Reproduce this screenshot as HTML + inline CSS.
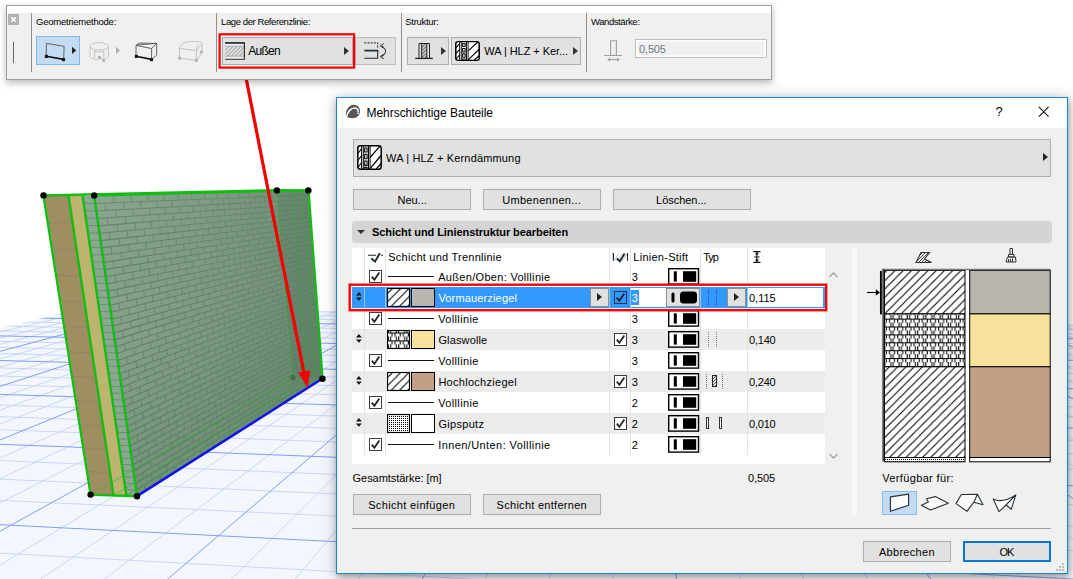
<!DOCTYPE html>
<html lang="de"><head><meta charset="utf-8"><title>Mehrschichtige Bauteile</title>
<style>
html,body{margin:0;padding:0;}
body{width:1073px;height:579px;overflow:hidden;background:#fff;position:relative;font-family:"Liberation Sans",sans-serif;font-size:12px;color:#000;}
#scene{position:absolute;left:0;top:0;}
.abs{position:absolute;}
.t{position:absolute;white-space:nowrap;line-height:14px;height:14px;}
/* toolbar */
#tb{position:absolute;left:6px;top:5px;width:766px;height:75px;background:#f0f0f0;border:1px solid #9d9d9d;box-sizing:border-box;box-shadow:0 3px 7px rgba(0,0,0,.28);}
#tb .cap{position:absolute;left:0;top:0;width:100%;height:7px;background:#fff;}
#tb .sep{position:absolute;top:7px;width:1px;height:59px;background:#8f8f8f;}
#tb .lbl{position:absolute;top:11px;font-size:9.5px;line-height:12px;white-space:nowrap;color:#000;}
.btn{position:absolute;box-sizing:border-box;background:#e1e1e1;border:1px solid #adadad;}
.arr{position:absolute;width:0;height:0;border-top:4px solid transparent;border-bottom:4px solid transparent;border-left:5px solid #222;}
/* dialog */
#dlg{position:absolute;left:336px;top:97px;width:732px;height:477px;box-sizing:border-box;border:1px solid #1883d7;background:#f0f0f0;box-shadow:0 1px 16px rgba(0,0,0,.2),1px 3px 7px rgba(0,0,0,.3);}
#dlg .title{position:absolute;left:0;top:0;width:730px;height:30px;background:#fff;}
.pb{position:absolute;box-sizing:border-box;background:#e1e1e1;border:1px solid #adadad;text-align:center;font-size:12px;line-height:19px;height:21px;white-space:nowrap;}
.row{position:absolute;left:16px;width:472px;height:21px;}
.cb{position:absolute;width:13px;height:13px;box-sizing:border-box;border:1px solid #333;background:#fff;}
.pen{position:absolute;width:32px;height:17px;box-sizing:border-box;border:2px solid #000;background:#fff;}
.pen i{position:absolute;left:4px;top:2px;width:3px;height:9px;background:#000;}
.pen b{position:absolute;left:13px;top:1px;width:13px;height:11px;background:#000;}
.sw{position:absolute;box-sizing:border-box;border:1px solid #000;width:24px;height:19px;}
.ln{position:absolute;height:1px;background:#000;left:36px;width:46px;top:10px;}
.vl{position:absolute;top:150px;width:1px;height:208px;background:#e3e3e3;}
</style></head>
<body>
<svg id="scene" width="1073" height="579" viewBox="0 0 1073 579">
<defs><clipPath id="gc"><path d="M0,328.3 L91,306.3 L1073,323.5 L1073,579 L0,579 Z"/></clipPath>
<linearGradient id="wg" x1="0" y1="0" x2="1" y2="0"><stop offset="0" stop-color="#86a48a"/><stop offset="0.55" stop-color="#7c9a81"/><stop offset="1" stop-color="#6d8b74"/></linearGradient>
<linearGradient id="mute" x1="0" y1="0" x2="1" y2="0"><stop offset="0" stop-color="#86a48a" stop-opacity="0.05"/><stop offset="0.5" stop-color="#7c9a81" stop-opacity="0.3"/><stop offset="1" stop-color="#6d8b74" stop-opacity="0.6"/></linearGradient><linearGradient id="vdark" x1="0" y1="0" x2="0.25" y2="1"><stop offset="0" stop-color="#a8c8ac" stop-opacity="0.12"/><stop offset="0.45" stop-color="#5a7a62" stop-opacity="0"/><stop offset="1" stop-color="#486850" stop-opacity="0.3"/></linearGradient><linearGradient id="fade" x1="0" y1="0" x2="0" y2="1"><stop offset="0" stop-color="#fff" stop-opacity="0.55"/><stop offset="1" stop-color="#fff" stop-opacity="0"/></linearGradient>
</defs>
<path d="M0,328.3 L91,306.3 L1073,323.5 L1073,579 L0,579 Z" fill="#f3f7fd"/>
<g clip-path="url(#gc)" fill="none">
<path d="M-2976.9,1007.2 L41705.2,10663.1 M-2455.3,887.9 L65598.3,11961.0 M-1763.1,729.6 L11801.3,2207.1 M-1521.6,674.4 L8530.9,1614.1 M-1324.4,629.3 L6741.9,1289.8 M-1021.5,560.1 L4837.1,944.4 M-902.7,532.9 L4270.0,841.6 M-799.9,509.4 L3837.7,763.2 M-630.6,470.7 L3222.1,651.6 M-560.1,454.6 L2995.2,610.5 M-497.1,440.2 L2804.9,576.0 M-389.2,415.5 L2503.4,521.3 M-342.6,404.8 L2382.0,499.3 M-300.1,395.1 L2275.4,480.0 M-225.3,378.0 L2096.9,447.6 M-192.2,370.5 L2021.5,433.9 M-161.6,363.5 L1953.4,421.6 M-106.7,350.9 L1835.5,400.2 M-82.0,345.3 L1784.1,390.9 M-58.9,340.0 L1736.9,382.3 M-16.9,330.4 L1653.3,367.2 M2.2,326.0 L1616.0,360.4 M20.2,321.9 L1581.4,354.1 M53.4,314.3 L1518.9,342.8 M68.6,310.8 L1490.7,337.7 M83.1,307.5 L1464.2,332.9 M1550.5,330.4 L65537.2,10666.3 M1523.9,329.9 L63860.0,10666.1 M1471.2,328.9 L60505.7,10665.6 M1445.1,328.5 L58828.6,10665.4 M1419.2,328.0 L57151.4,10665.2 M1367.9,327.1 L53797.1,10664.7 M1342.5,326.6 L52119.9,10664.5 M1317.2,326.2 L50442.8,10664.3 M1267.1,325.3 L47088.5,10663.8 M1242.3,324.9 L45411.3,10663.6 M1217.6,324.4 L43734.2,10663.4 M1168.8,323.5 L52590.0,13882.5 M1144.5,323.1 L39061.4,10761.4 M1120.5,322.7 L30552.7,8798.4 M1072.8,321.8 L20443.7,6466.2 M1049.2,321.4 L17196.5,5717.1 M1025.7,321.0 L14640.9,5127.5 M979.1,320.1 L10876.0,4258.9 M956.0,319.7 L9449.4,3929.8 M933.1,319.3 L8235.9,3649.8 M887.6,318.5 L6281.9,3199.0 M865.1,318.1 L5483.7,3014.9 M842.7,317.7 L4777.3,2851.9 M798.3,316.9 L3583.2,2576.4 M776.3,316.5 L3073.9,2459.0 M754.4,316.1 L2612.3,2352.5 M711.0,315.3 L1807.5,2166.8 M689.5,315.0 L1454.6,2085.4 M668.1,314.6 L1129.5,2010.4 M625.7,313.8 L550.5,1876.8 M604.6,313.4 L291.6,1817.1 M583.7,313.1 L50.3,1761.4 M542.3,312.3 L-386.2,1660.7 M521.7,312.0 L-584.2,1615.0 M501.3,311.6 L-770.4,1572.1 M460.7,310.9 L-1111.1,1493.5 M440.6,310.5 L-1267.4,1457.4 M420.6,310.2 L-1415.4,1423.2 M381.0,309.4 L-1688.8,1360.2 M361.3,309.1 L-1815.4,1331.0 M341.7,308.7 L-1935.8,1303.2 M302.9,308.0 L-2160.0,1251.5 M283.7,307.7 L-2264.5,1227.4 M264.6,307.4 L-2364.5,1204.3 M226.6,306.7 L-2551.6,1161.1 M207.8,306.3 L-2639.4,1140.9 M189.0,306.0 L-2723.7,1121.4 M151.9,305.3 L-2882.3,1084.8 M133.4,305.0 L-2957.1,1067.6 M115.1,304.7 L-3029.1,1051.0" stroke="#c6d3f7" stroke-width="0.9"/>
<path d="M-2065.5,798.8 L19693.5,3638.0 M-1160.2,591.8 L5613.6,1085.2 M-709.9,488.8 L3497.2,701.5 M-440.4,427.2 L2642.9,546.6 M-261.1,386.2 L2181.0,462.9 M-133.1,357.0 L1891.7,410.4 M-37.3,335.0 L1693.4,374.4 M37.3,318.0 L1549.1,348.3 M96.9,304.4 L1439.3,328.4 M1497.5,329.4 L62182.9,10665.8 M1393.5,327.6 L55474.2,10664.9 M1292.1,325.7 L48765.6,10664.0 M1193.1,324.0 L42057.0,10663.1 M1096.6,322.2 L24707.2,7449.8 M1002.3,320.6 L12577.3,4651.4 M910.3,318.9 L7191.0,3408.8 M820.4,317.3 L4147.8,2706.7 M732.6,315.7 L2192.0,2255.5 M646.8,314.2 L829.0,1941.0 M562.9,312.7 L-175.1,1709.4 M480.9,311.2 L-945.7,1531.6 M400.7,309.8 L-1555.7,1390.9 M322.3,308.4 L-2050.5,1276.7 M245.5,307.0 L-2460.1,1182.2 M170.4,305.7 L-2804.6,1102.8 M96.9,304.4 L-3098.4,1035.0" stroke="#7f9fee" stroke-width="1"/>
</g>
<path d="M94.2,196.0 L308.5,190.4 L322.5,378.5 L137.0,496.2 Z" fill="url(#wg)"/>
<path d="M95.3,203.5 L308.8,194.9 M96.3,211.0 L309.2,199.5 M97.4,218.5 L309.5,204.0 M98.5,225.9 L309.8,208.5 M99.5,233.3 L310.2,213.0 M100.6,240.6 L310.5,217.4 M101.6,247.9 L310.8,221.9 M102.6,255.2 L311.2,226.4 M103.7,262.4 L311.5,230.8 M104.7,269.6 L311.8,235.2 M105.7,276.8 L312.2,239.6 M106.7,284.0 L312.5,244.0 M107.8,291.1 L312.8,248.4 M108.8,298.2 L313.1,252.8 M109.8,305.2 L313.5,257.1 M110.8,312.2 L313.8,261.5 M111.8,319.2 L314.1,265.8 M112.8,326.1 L314.4,270.2 M113.7,333.1 L314.8,274.5 M114.7,339.9 L315.1,278.8 M115.7,346.8 L315.4,283.1 M116.7,353.6 L315.7,287.3 M117.6,360.4 L316.0,291.6 M118.6,367.2 L316.3,295.9 M119.6,373.9 L316.7,300.1 M120.5,380.6 L317.0,304.3 M121.5,387.3 L317.3,308.5 M122.4,393.9 L317.6,312.8 M123.4,400.5 L317.9,316.9 M124.3,407.1 L318.2,321.1 M125.2,413.6 L318.5,325.3 M126.2,420.2 L318.9,329.5 M127.1,426.6 L319.2,333.6 M128.0,433.1 L319.5,337.7 M128.9,439.5 L319.8,341.9 M129.8,445.9 L320.1,346.0 M130.7,452.3 L320.4,350.1 M131.7,458.7 L320.7,354.2 M132.6,465.0 L321.0,358.3 M133.4,471.3 L321.3,362.3 M134.3,477.6 L321.6,366.4 M135.2,483.8 L321.9,370.4 M136.1,490.0 L322.2,374.5" stroke="#587560" stroke-width="1.1" fill="none" opacity="0.85"/>
<path d="M113.3,195.5 L114.3,202.8 M131.1,195.0 L132.0,202.0 M147.7,194.6 L148.5,201.4 M163.2,194.2 L164.0,200.8 M177.8,193.8 L178.5,200.2 M191.5,193.5 L192.1,199.6 M204.3,193.1 L205.0,199.1 M216.5,192.8 L217.1,198.6 M228.0,192.5 L228.6,198.2 M238.9,192.2 L239.4,197.7 M249.2,192.0 L249.7,197.3 M258.9,191.7 L259.4,196.9 M268.2,191.5 L268.7,196.6 M277.1,191.2 L277.5,196.2 M285.5,191.0 L285.9,195.9 M293.5,190.8 L293.9,195.5 M301.2,190.6 L301.5,195.2 M104.9,203.1 L106.0,210.5 M123.3,202.4 L124.2,209.5 M140.4,201.7 L141.3,208.6 M156.4,201.1 L157.2,207.7 M171.4,200.5 L172.1,206.9 M185.4,199.9 L186.1,206.1 M198.7,199.4 L199.3,205.4 M211.1,198.9 L211.8,204.7 M222.9,198.4 L223.5,204.1 M234.0,197.9 L234.6,203.5 M244.6,197.5 L245.1,202.9 M254.6,197.1 L255.1,202.4 M264.1,196.7 L264.6,201.9 M273.1,196.4 L273.6,201.4 M281.7,196.0 L282.1,200.9 M289.9,195.7 L290.3,200.5 M297.8,195.4 L298.1,200.1 M305.2,195.1 L305.6,199.7 M115.3,210.0 L116.2,217.2 M132.9,209.0 L133.8,216.0 M149.4,208.1 L150.2,214.9 M164.8,207.3 L165.6,213.8 M179.2,206.5 L180.0,212.8 M192.8,205.8 L193.5,211.9 M205.6,205.1 L206.3,211.0 M217.7,204.4 L218.3,210.2 M229.1,203.8 L229.7,209.4 M239.9,203.2 L240.5,208.7 M250.2,202.7 L250.7,208.0 M259.9,202.1 L260.3,207.3 M269.1,201.6 L269.6,206.7 M277.9,201.2 L278.3,206.1 M286.3,200.7 L286.7,205.5 M294.3,200.3 L294.6,205.0 M301.9,199.9 L302.2,204.5 M107.0,217.8 L108.0,225.1 M125.2,216.6 L126.1,223.6 M142.1,215.4 L143.0,222.2 M158.0,214.3 L158.8,220.9 M172.9,213.3 L173.6,219.7 M186.8,212.4 L187.5,218.5 M200.0,211.5 L200.6,217.5 M212.4,210.6 L213.0,216.5 M224.1,209.8 L224.7,215.5 M235.1,209.1 L235.7,214.6 M245.6,208.3 L246.1,213.7 M255.6,207.7 L256.0,212.9 M265.0,207.0 L265.5,212.1 M274.0,206.4 L274.4,211.4 M282.5,205.8 L282.9,210.7 M290.7,205.3 L291.1,210.0 M298.5,204.7 L298.8,209.4 M305.9,204.2 L306.3,208.8 M117.2,224.3 L118.2,231.5 M134.7,222.9 L135.6,229.8 M151.0,221.6 L151.9,228.2 M166.3,220.3 L167.1,226.7 M180.7,219.1 L181.4,225.4 M194.2,218.0 L194.9,224.1 M206.9,217.0 L207.5,222.9 M218.9,216.0 L219.5,221.7 M230.2,215.0 L230.8,220.6 M241.0,214.1 L241.5,219.6 M251.2,213.3 L251.6,218.6 M260.8,212.5 L261.3,217.7 M270.0,211.8 L270.4,216.8 M278.7,211.0 L279.1,216.0 M287.1,210.4 L287.5,215.2 M295.0,209.7 L295.4,214.4 M302.6,209.1 L302.9,213.7 M109.0,232.3 L110.0,239.6 M127.0,230.6 L128.0,237.6 M143.9,229.0 L144.7,235.7 M159.6,227.5 L160.4,234.0 M174.4,226.0 L175.1,232.4 M188.2,224.7 L188.9,230.9 M201.3,223.5 L202.0,229.4 M213.6,222.3 L214.2,228.1 M225.2,221.1 L225.8,226.8 M236.2,220.1 L236.8,225.6 M246.6,219.1 L247.1,224.4 M256.5,218.1 L257.0,223.3 M265.9,217.2 L266.4,222.3 M274.8,216.4 L275.3,221.3 M283.4,215.6 L283.8,220.4 M291.5,214.8 L291.8,219.5 M299.2,214.0 L299.6,218.6 M306.6,213.3 L306.9,217.8 M119.2,238.6 L120.1,245.6 M136.5,236.6 L137.4,243.5 M152.7,234.9 L153.5,241.5 M167.9,233.2 L168.7,239.6 M182.1,231.6 L182.9,237.8 M195.5,230.1 L196.2,236.2 M208.2,228.7 L208.8,234.6 M220.1,227.4 L220.7,233.1 M231.4,226.2 L231.9,231.7 M242.0,225.0 L242.5,230.4 M252.1,223.9 L252.6,229.1 M261.7,222.8 L262.2,228.0 M270.9,221.8 L271.3,226.8 M279.6,220.9 L280.0,225.7 M287.8,219.9 L288.2,224.7 M295.7,219.1 L296.1,223.7 M303.3,218.2 L303.6,222.8 M111.0,246.7 L112.0,253.9 M128.9,244.5 L129.8,251.4 M145.6,242.4 L146.5,249.1 M161.2,240.5 L162.0,247.0 M175.9,238.7 L176.6,245.0 M189.6,237.0 L190.3,243.1 M202.6,235.4 L203.3,241.3 M214.8,233.8 L215.4,239.6 M226.4,232.4 L226.9,238.0 M237.3,231.0 L237.8,236.5 M247.7,229.8 L248.2,235.1 M257.5,228.5 L258.0,233.7 M266.8,227.4 L267.3,232.4 M275.7,226.3 L276.1,231.2 M284.2,225.2 L284.6,230.0 M292.2,224.2 L292.6,228.9 M299.9,223.3 L300.3,227.9 M307.3,222.3 L307.6,226.8 M121.1,252.6 L122.0,259.6 M138.3,250.3 L139.2,257.0 M154.4,248.0 L155.2,254.6 M169.4,246.0 L170.2,252.3 M183.6,244.0 L184.3,250.2 M196.9,242.2 L197.6,248.1 M209.4,240.4 L210.1,246.2 M221.3,238.8 L221.9,244.4 M232.5,237.2 L233.0,242.7 M243.1,235.8 L243.6,241.1 M253.1,234.4 L253.6,239.6 M262.7,233.1 L263.1,238.2 M271.7,231.8 L272.2,236.8 M280.4,230.6 L280.8,235.5 M288.6,229.5 L289.0,234.2 M296.5,228.4 L296.9,233.0 M304.0,227.3 L304.3,231.9 M113.0,261.0 L114.0,268.1 M130.8,258.3 L131.7,265.2 M147.3,255.8 L148.2,262.4 M162.8,253.4 L163.6,259.9 M177.4,251.2 L178.1,257.4 M191.0,249.1 L191.7,255.2 M203.9,247.2 L204.5,253.1 M216.0,245.3 L216.6,251.0 M227.5,243.6 L228.1,249.1 M238.4,241.9 L238.9,247.3 M248.7,240.4 L249.2,245.6 M258.4,238.9 L258.9,244.0 M267.7,237.5 L268.2,242.5 M276.5,236.1 L277.0,241.0 M285.0,234.8 L285.3,239.6 M293.0,233.6 L293.4,238.3 M300.6,232.4 L301.0,237.0 M308.0,231.3 L308.3,235.8 M123.0,266.6 L123.9,273.5 M140.1,263.8 L140.9,270.5 M156.0,261.1 L156.8,267.6 M171.0,258.6 L171.7,264.9 M185.0,256.3 L185.7,262.4 M198.2,254.1 L198.9,260.0 M210.7,252.0 L211.3,257.8 M222.4,250.1 L223.0,255.7 M233.6,248.2 L234.1,253.7 M244.1,246.5 L244.6,251.8 M254.1,244.8 L254.6,250.0 M263.6,243.2 L264.0,248.3 M272.6,241.7 L273.0,246.7 M281.2,240.3 L281.6,245.1 M289.4,238.9 L289.8,243.7 M297.2,237.6 L297.6,242.3 M304.7,236.4 L305.0,240.9 M115.0,275.2 L116.0,282.2 M132.6,272.0 L133.5,278.8 M149.0,269.0 L149.9,275.6 M164.4,266.3 L165.2,272.6 M178.8,263.7 L179.6,269.8 M192.4,261.2 L193.1,267.2 M205.2,258.9 L205.8,264.7 M217.2,256.7 L217.8,262.4 M228.6,254.7 L229.2,260.2 M239.4,252.7 L240.0,258.1 M249.7,250.9 L250.2,256.1 M259.4,249.1 L259.8,254.2 M268.6,247.5 L269.0,252.5 M277.4,245.9 L277.8,250.8 M285.7,244.4 L286.1,249.1 M293.7,242.9 L294.1,247.6 M301.4,241.6 L301.7,246.1 M308.6,240.3 L309.0,244.7 M124.9,280.4 L125.8,287.3 M141.8,277.2 L142.7,283.8 M157.6,274.1 L158.4,280.5 M172.5,271.2 L173.2,277.5 M186.4,268.5 L187.1,274.6 M199.5,266.0 L200.2,271.8 M211.9,263.5 L212.5,269.3 M223.6,261.3 L224.2,266.9 M234.7,259.1 L235.2,264.6 M245.1,257.1 L245.6,262.4 M255.1,255.2 L255.5,260.3 M264.5,253.3 L264.9,258.4 M273.5,251.6 L273.9,256.5 M282.0,249.9 L282.4,254.7 M290.2,248.4 L290.6,253.0 M297.9,246.8 L298.3,251.4 M305.4,245.4 L305.7,249.9 M116.9,289.2 L117.9,296.1 M134.4,285.5 L135.3,292.3 M150.7,282.1 L151.5,288.7 M166.0,279.0 L166.7,285.3 M180.3,276.0 L181.0,282.1 M193.8,273.2 L194.4,279.1 M206.5,270.5 L207.1,276.3 M218.4,268.0 L219.0,273.7 M229.8,265.7 L230.3,271.2 M240.5,263.5 L241.0,268.8 M250.7,261.3 L251.1,266.5 M260.3,259.3 L260.8,264.4 M269.5,257.4 L269.9,262.4 M278.2,255.6 L278.6,260.4 M286.5,253.9 L286.9,258.6 M294.5,252.2 L294.8,256.8 M302.1,250.6 L302.4,255.2 M309.3,249.1 L309.6,253.6 M126.8,294.2 L127.7,301.0 M143.5,290.4 L144.4,297.0 M159.3,286.9 L160.1,293.3 M174.0,283.7 L174.7,289.9 M187.8,280.6 L188.5,286.6 M200.9,277.7 L201.5,283.6 M213.1,275.0 L213.8,280.7 M224.8,272.4 L225.3,277.9 M235.7,270.0 L236.3,275.4 M246.1,267.7 L246.7,272.9 M256.0,265.5 L256.5,270.6 M265.4,263.4 L265.9,268.4 M274.3,261.4 L274.8,266.3 M282.8,259.5 L283.2,264.3 M290.9,257.7 L291.3,262.4 M298.7,256.0 L299.0,260.6 M306.1,254.4 L306.4,258.8 M118.9,303.0 L119.8,309.9 M136.2,299.0 L137.1,305.6 M152.4,295.2 L153.2,301.6 M167.5,291.6 L168.3,297.8 M181.7,288.2 L182.5,294.3 M195.1,285.1 L195.8,291.0 M207.7,282.1 L208.4,287.8 M219.6,279.3 L220.2,284.9 M230.9,276.6 L231.4,282.1 M241.5,274.1 L242.1,279.4 M251.6,271.7 L252.1,276.9 M261.2,269.5 L261.7,274.5 M270.4,267.3 L270.8,272.2 M279.0,265.3 L279.5,270.1 M287.3,263.3 L287.7,268.0 M295.2,261.5 L295.6,266.0 M302.8,259.7 L303.1,264.2 M310.0,258.0 L310.3,262.4 M128.6,307.8 L129.5,314.5 M145.3,303.6 L146.1,310.1 M160.9,299.7 L161.6,306.0 M175.5,296.0 L176.2,302.2 M189.2,292.6 L189.9,298.6 M202.2,289.4 L202.8,295.2 M214.4,286.3 L215.0,292.0 M225.9,283.5 L226.5,288.9 M236.8,280.7 L237.3,286.1 M247.2,278.1 L247.7,283.4 M257.0,275.7 L257.4,280.8 M266.3,273.4 L266.7,278.3 M275.2,271.1 L275.6,276.0 M283.6,269.0 L284.0,273.8 M291.7,267.0 L292.1,271.6 M299.4,265.1 L299.8,269.6 M306.8,263.3 L307.1,267.7 M120.8,316.8 L121.8,323.6 M138.0,312.3 L138.8,318.9 M154.0,308.0 L154.8,314.5 M169.0,304.1 L169.8,310.3 M183.2,300.4 L183.9,306.4 M196.5,296.9 L197.1,302.7 M209.0,293.6 L209.6,299.3 M220.8,290.4 L221.4,296.0 M232.0,287.5 L232.5,292.9 M242.6,284.7 L243.1,290.0 M252.6,282.0 L253.1,287.2 M262.2,279.5 L262.6,284.5 M271.2,277.1 L271.7,282.0 M279.9,274.9 L280.3,279.6 M288.1,272.7 L288.5,277.4 M296.0,270.6 L296.3,275.2 M303.5,268.6 L303.8,273.1 M310.6,266.7 L311.0,271.1 M130.4,321.2 L131.4,327.9 M147.0,316.6 L147.8,323.1 M162.4,312.3 L163.2,318.6 M177.0,308.3 L177.7,314.4 M190.6,304.5 L191.3,310.5 M203.5,301.0 L204.1,306.7 M215.6,297.6 L216.2,303.2 M227.0,294.4 L227.6,299.9 M237.9,291.4 L238.4,296.7 M248.2,288.6 L248.7,293.7 M257.9,285.8 L258.4,290.9 M267.2,283.3 L267.6,288.2 M276.0,280.8 L276.4,285.6 M284.4,278.5 L284.8,283.2 M292.4,276.3 L292.8,280.9 M300.1,274.1 L300.5,278.6 M307.4,272.1 L307.8,276.5 M122.7,330.4 L123.6,337.2 M139.7,325.5 L140.6,332.0 M155.6,320.8 L156.5,327.2 M170.6,316.5 L171.3,322.7 M184.6,312.4 L185.3,318.4 M197.8,308.6 L198.4,314.4 M210.2,304.9 L210.8,310.6 M222.0,301.5 L222.6,307.0 M233.1,298.3 L233.6,303.6 M243.6,295.2 L244.1,300.4 M253.6,292.3 L254.1,297.4 M263.1,289.5 L263.5,294.5 M272.1,286.9 L272.5,291.8 M280.7,284.4 L281.1,289.1 M288.9,282.0 L289.3,286.7 M296.7,279.7 L297.1,284.3 M304.2,277.6 L304.5,282.0 M311.3,275.5 L311.6,279.8 M132.3,334.6 L133.2,341.2 M148.7,329.6 L149.5,336.0 M164.0,324.9 L164.8,331.1 M178.4,320.5 L179.2,326.5 M192.0,316.4 L192.7,322.2 M204.7,312.5 L205.4,318.2 M216.8,308.8 L217.4,314.3 M228.2,305.3 L228.7,310.7 M238.9,302.0 L239.5,307.3 M249.2,298.9 L249.7,304.0 M258.9,295.9 L259.3,301.0 M268.1,293.1 L268.5,298.0 M276.9,290.4 L277.3,295.2 M285.2,287.9 L285.6,292.6 M293.2,285.5 L293.6,290.0 M300.8,283.1 L301.2,287.6 M308.1,280.9 L308.4,285.3 M124.6,344.0 L125.5,350.7 M141.5,338.6 L142.3,345.1 M157.3,333.5 L158.1,339.8 M172.1,328.8 L172.8,334.9 M186.0,324.4 L186.7,330.3 M199.1,320.2 L199.8,325.9 M211.5,316.2 L212.1,321.8 M223.1,312.5 L223.7,318.0 M234.2,309.0 L234.7,314.3 M244.6,305.6 L245.1,310.8 M254.6,302.5 L255.0,307.5 M264.0,299.5 L264.4,304.4 M273.0,296.6 L273.4,301.4 M281.5,293.9 L281.9,298.6 M289.6,291.3 L290.0,295.9 M297.4,288.8 L297.8,293.3 M304.8,286.4 L305.2,290.8 M312.0,284.2 L312.3,288.5 M134.1,347.8 L135.0,354.4 M150.3,342.4 L151.2,348.8 M165.6,337.3 L166.4,343.5 M179.9,332.6 L180.6,338.6 M193.3,328.1 L194.0,333.9 M206.0,323.9 L206.6,329.5 M218.0,319.9 L218.6,325.4 M229.3,316.1 L229.8,321.5 M240.0,312.5 L240.5,317.8 M250.2,309.2 L250.6,314.3 M259.8,306.0 L260.3,310.9 M269.0,302.9 L269.4,307.8 M277.7,300.0 L278.1,304.8 M286.0,297.2 L286.4,301.9 M293.9,294.6 L294.3,299.1 M301.5,292.1 L301.9,296.5 M308.8,289.6 L309.1,294.0 M126.5,357.3 L127.4,364.0 M143.2,351.5 L144.1,358.0 M158.9,346.1 L159.7,352.3 M173.6,341.0 L174.3,347.1 M187.4,336.2 L188.1,342.1 M200.4,331.7 L201.1,337.4 M212.7,327.4 L213.3,333.0 M224.3,323.4 L224.9,328.8 M235.3,319.6 L235.8,324.9 M245.6,316.0 L246.2,321.2 M255.5,312.6 L256.0,317.6 M264.9,309.3 L265.3,314.2 M273.8,306.2 L274.2,311.0 M282.3,303.3 L282.7,308.0 M290.4,300.5 L290.8,305.1 M298.1,297.8 L298.5,302.3 M305.5,295.2 L305.9,299.6 M312.6,292.8 L312.9,297.1 M135.9,360.9 L136.8,367.5 M152.0,355.1 L152.8,361.4 M167.1,349.7 L167.9,355.8 M181.3,344.5 L182.0,350.5 M194.7,339.7 L195.4,345.5 M207.3,335.2 L207.9,340.8 M219.2,330.9 L219.7,336.4 M230.4,326.8 L231.0,332.2 M241.0,323.0 L241.6,328.2 M251.1,319.4 L251.6,324.4 M260.7,315.9 L261.2,320.9 M269.8,312.6 L270.3,317.5 M278.5,309.5 L278.9,314.2 M286.8,306.5 L287.2,311.1 M294.7,303.7 L295.1,308.2 M302.2,300.9 L302.6,305.4 M309.4,298.3 L309.8,302.7 M128.3,370.6 L129.2,377.2 M144.9,364.4 L145.8,370.8 M160.5,358.6 L161.3,364.8 M175.1,353.1 L175.8,359.1 M188.8,348.0 L189.5,353.8 M201.7,343.1 L202.4,348.8 M213.9,338.6 L214.5,344.1 M225.4,334.3 L226.0,339.6 M236.3,330.2 L236.9,335.4 M246.7,326.3 L247.2,331.4 M256.5,322.6 L256.9,327.6 M265.8,319.1 L266.2,324.0 M274.7,315.8 L275.1,320.6 M283.1,312.7 L283.5,317.3 M291.2,309.6 L291.5,314.2 M298.9,306.8 L299.2,311.2 M306.2,304.0 L306.6,308.4 M313.3,301.4 L313.6,305.6 M137.6,373.9 L138.5,380.4 M153.7,367.7 L154.5,374.0 M168.7,361.9 L169.4,368.0 M182.8,356.4 L183.5,362.3 M196.0,351.3 L196.7,357.0 M208.5,346.4 L209.2,352.0 M220.3,341.8 L220.9,347.3 M231.5,337.5 L232.1,342.8 M242.1,333.4 L242.6,338.6 M252.1,329.5 L252.6,334.5 M261.6,325.8 L262.1,330.7 M270.7,322.3 L271.1,327.1 M279.3,318.9 L279.8,323.6 M287.6,315.7 L288.0,320.3 M295.4,312.7 L295.8,317.2 M302.9,309.8 L303.3,314.2 M310.1,307.0 L310.4,311.3 M130.1,383.8 L131.1,390.3 M146.6,377.1 L147.5,383.5 M162.1,370.9 L162.9,377.1 M176.6,365.1 L177.3,371.1 M190.2,359.6 L190.9,365.4 M203.0,354.5 L203.7,360.1 M215.1,349.6 L215.7,355.1 M226.6,345.0 L227.1,350.4 M237.4,340.7 L237.9,345.9 M247.7,336.5 L248.2,341.6 M257.4,332.6 L257.9,337.6 M266.7,328.9 L267.1,333.7 M275.5,325.3 L275.9,330.1 M283.9,322.0 L284.3,326.6 M291.9,318.7 L292.3,323.3 M299.6,315.7 L299.9,320.1 M306.9,312.7 L307.2,317.1 M313.9,309.9 L314.2,314.2 M139.4,386.8 L140.3,393.2 M155.3,380.2 L156.1,386.4 M170.2,374.0 L170.9,380.1 M184.2,368.2 L184.9,374.1 M197.4,362.7 L198.0,368.4 M209.8,357.6 L210.4,363.1 M221.5,352.7 L222.1,358.1 M232.6,348.1 L233.1,353.4 M243.1,343.7 L243.6,348.9 M253.1,339.6 L253.6,344.6 M262.6,335.6 L263.0,340.5 M271.6,331.9 L272.0,336.7 M280.2,328.3 L280.6,333.0 M288.3,324.9 L288.7,329.5 M296.2,321.7 L296.5,326.1 M303.6,318.6 L304.0,322.9 M310.8,315.6 L311.1,319.9 M132.0,396.8 L132.9,403.3 M148.3,389.8 L149.2,396.1 M163.6,383.2 L164.4,389.3 M178.0,377.0 L178.8,382.9 M191.5,371.2 L192.2,377.0 M204.3,365.7 L204.9,371.3 M216.3,360.6 L216.9,366.0 M227.7,355.7 L228.3,361.0 M238.5,351.1 L239.0,356.3 M248.7,346.7 L249.2,351.7 M258.4,342.5 L258.8,347.5 M267.6,338.6 L268.0,343.4 M276.3,334.8 L276.8,339.5 M284.7,331.2 L285.1,335.8 M292.7,327.8 L293.0,332.3 M300.3,324.5 L300.6,328.9 M307.6,321.4 L307.9,325.7 M314.5,318.4 L314.9,322.6 M141.1,399.6 L142.0,406.0 M156.9,392.6 L157.7,398.8 M171.7,386.1 L172.4,392.1 M185.6,379.9 L186.3,385.7 M198.7,374.1 L199.3,379.8 M211.0,368.6 L211.6,374.2 M222.7,363.5 L223.2,368.8 M233.7,358.6 L234.2,363.8 M244.1,354.0 L244.6,359.1 M254.1,349.6 L254.5,354.5 M263.5,345.4 L263.9,350.3 M272.4,341.4 L272.9,346.2 M281.0,337.6 L281.4,342.3 M289.1,334.0 L289.5,338.6 M296.9,330.6 L297.3,335.0 M304.3,327.3 L304.7,331.6 M311.4,324.1 L311.8,328.4 M133.8,409.7 L134.7,416.2 M150.0,402.3 L150.8,408.5 M165.2,395.4 L166.0,401.4 M179.5,388.8 L180.2,394.7 M192.9,382.7 L193.6,388.4 M205.6,376.9 L206.2,382.5 M217.5,371.5 L218.1,376.9 M228.8,366.3 L229.4,371.6 M239.5,361.4 L240.0,366.6 M249.7,356.8 L250.1,361.8 M259.3,352.4 L259.8,357.3 M268.5,348.2 L268.9,353.0 M277.2,344.2 L277.6,348.9 M285.5,340.4 L285.9,345.0 M293.4,336.8 L293.8,341.3 M301.0,333.3 L301.4,337.7 M308.2,330.0 L308.6,334.3 M315.2,326.8 L315.5,331.0 M142.9,412.3 L143.7,418.6 M158.5,404.9 L159.3,411.0 M173.2,398.0 L173.9,403.9 M187.0,391.5 L187.7,397.3 M200.0,385.4 L200.6,391.0 M212.2,379.6 L212.8,385.1 M223.8,374.2 L224.4,379.5 M234.8,369.0 L235.3,374.2 M245.2,364.1 L245.7,369.2 M255.0,359.5 L255.5,364.4 M264.4,355.1 L264.8,359.9 M273.3,350.9 L273.7,355.6 M281.8,346.9 L282.2,351.5 M289.9,343.1 L290.3,347.6 M297.6,339.5 L298.0,343.9 M305.0,336.0 L305.3,340.3 M312.1,332.6 L312.4,336.9 M135.5,422.5 L136.4,428.9 M151.7,414.7 L152.5,420.9 M166.7,407.4 L167.5,413.4 M180.9,400.6 L181.6,406.4 M194.3,394.1 L194.9,399.8 M206.8,388.0 L207.5,393.5 M218.7,382.3 L219.3,387.6 M229.9,376.8 L230.5,382.1 M240.6,371.7 L241.1,376.8 M250.6,366.8 L251.1,371.8 M260.2,362.2 L260.7,367.0 M269.3,357.7 L269.8,362.5 M278.0,353.5 L278.4,358.2 M286.3,349.5 L286.7,354.1 M294.2,345.7 L294.5,350.2 M301.7,342.1 L302.1,346.4 M308.9,338.6 L309.2,342.8 M315.8,335.2 L316.1,339.4 M144.6,424.8 L145.4,431.1 M160.1,417.1 L160.9,423.2 M174.7,409.9 L175.4,415.7 M188.4,403.0 L189.1,408.8 M201.3,396.6 L201.9,402.2 M213.5,390.5 L214.1,396.0 M225.0,384.8 L225.5,390.1 M235.8,379.4 L236.4,384.5 M246.2,374.3 L246.7,379.3 M256.0,369.4 L256.4,374.3 M265.3,364.7 L265.7,369.5 M274.1,360.3 L274.6,365.0 M282.6,356.1 L283.0,360.7 M290.6,352.1 L291.0,356.6 M298.3,348.3 L298.7,352.7 M305.7,344.6 L306.0,348.9 M312.7,341.1 L313.0,345.3 M137.3,435.2 L138.2,441.6 M153.3,427.1 L154.1,433.2 M168.3,419.4 L169.0,425.3 M182.4,412.2 L183.1,418.0 M195.6,405.4 L196.3,411.0 M208.1,399.0 L208.7,404.5 M219.9,393.0 L220.5,398.3 M231.0,387.3 L231.6,392.5 M241.6,381.9 L242.1,387.0 M251.6,376.8 L252.1,381.7 M261.1,371.9 L261.6,376.7 M270.2,367.2 L270.6,372.0 M278.8,362.8 L279.2,367.4 M287.0,358.6 L287.4,363.1 M294.9,354.6 L295.3,359.0 M302.4,350.8 L302.8,355.1 M309.6,347.1 L309.9,351.3 M316.4,343.6 L316.8,347.7 M146.3,437.3 L147.1,443.5 M161.7,429.2 L162.5,435.2 M176.2,421.6 L176.9,427.4 M189.8,414.5 L190.4,420.1 M202.6,407.7 L203.2,413.3 M214.7,401.4 L215.3,406.8 M226.1,395.4 L226.7,400.6 M236.9,389.7 L237.4,394.8 M247.2,384.3 L247.7,389.3 M256.9,379.2 L257.4,384.1 M266.2,374.3 L266.6,379.1 M275.0,369.7 L275.4,374.3 M283.4,365.3 L283.8,369.8 M291.4,361.1 L291.8,365.5 M299.1,357.0 L299.4,361.4 M306.4,353.2 L306.7,357.5 M313.4,349.5 L313.7,353.7 M139.1,447.8 L139.9,454.1 M154.9,439.3 L155.7,445.4 M169.8,431.3 L170.6,437.2 M183.8,423.7 L184.5,429.5 M196.9,416.6 L197.6,422.2 M209.3,410.0 L209.9,415.4 M221.0,403.6 L221.6,408.9 M232.1,397.7 L232.7,402.8 M242.6,392.0 L243.1,397.0 M252.6,386.6 L253.1,391.6 M262.1,381.5 L262.5,386.3 M271.1,376.7 L271.5,381.4 M279.6,372.1 L280.0,376.6 M287.8,367.6 L288.2,372.1 M295.6,363.4 L296.0,367.8 M303.1,359.4 L303.4,363.7 M310.2,355.6 L310.6,359.8 M317.1,351.9 L317.4,356.0 M148.0,449.7 L148.8,455.8 M163.3,441.2 L164.0,447.2 M177.6,433.3 L178.4,439.1 M191.1,425.8 L191.8,431.4 M203.9,418.8 L204.5,424.3 M215.9,412.1 L216.5,417.5 M227.2,405.8 L227.8,411.1 M238.0,399.9 L238.5,405.0 M248.2,394.3 L248.7,399.2 M257.9,388.9 L258.3,393.8 M267.1,383.8 L267.5,388.6 M275.8,379.0 L276.2,383.6 M284.2,374.4 L284.6,378.9 M292.1,370.0 L292.5,374.4 M299.8,365.7 L300.1,370.1 M307.0,361.7 L307.4,366.0 M314.0,357.9 L314.3,362.0 M140.8,460.3 L141.7,466.5 M156.6,451.4 L157.4,457.4 M171.3,443.0 L172.1,448.9 M185.2,435.2 L185.9,440.9 M198.2,427.8 L198.9,433.3 M210.6,420.8 L211.2,426.2 M222.2,414.2 L222.8,419.5 M233.2,408.0 L233.8,413.1 M243.6,402.1 L244.2,407.1 M253.6,396.5 L254.0,401.3 M263.0,391.1 L263.4,395.9 M271.9,386.1 L272.4,390.7 M280.5,381.2 L280.9,385.8 M288.6,376.6 L289.0,381.1 M296.4,372.2 L296.7,376.6 M303.8,368.0 L304.1,372.3 M310.9,364.0 L311.2,368.2 M317.7,360.1 L318.0,364.2 M149.6,461.9 L150.5,468.0 M164.8,453.1 L165.6,459.0 M179.1,444.8 L179.8,450.6 M192.5,437.1 L193.2,442.6 M205.1,429.7 L205.8,435.2 M217.1,422.8 L217.6,428.1 M228.3,416.3 L228.9,421.4 M239.0,410.1 L239.5,415.1 M249.2,404.2 L249.7,409.1 M258.8,398.6 L259.3,403.4 M267.9,393.3 L268.4,398.0 M276.7,388.2 L277.1,392.8 M285.0,383.4 L285.4,387.9 M292.9,378.8 L293.3,383.2 M300.5,374.4 L300.8,378.7 M307.7,370.2 L308.1,374.4 M314.7,366.2 L315.0,370.3 M142.5,472.7 L143.4,478.8 M158.2,463.4 L159.0,469.4 M172.8,454.7 L173.5,460.5 M186.6,446.6 L187.3,452.2 M199.5,438.8 L200.2,444.3 M211.8,431.6 L212.4,436.9 M223.3,424.7 L223.9,429.9 M234.3,418.2 L234.8,423.3 M244.7,412.1 L245.2,417.0 M254.5,406.2 L255.0,411.1 M263.9,400.7 L264.3,405.4 M272.8,395.4 L273.2,400.0 M281.3,390.3 L281.7,394.9 M289.4,385.5 L289.7,390.0 M297.1,380.9 L297.4,385.3 M304.5,376.6 L304.8,380.8 M311.5,372.4 L311.9,376.5 M318.3,368.3 L318.6,372.4 M151.3,474.0 L152.1,480.1 M166.4,464.9 L167.1,470.8 M180.5,456.3 L181.2,462.0 M193.8,448.2 L194.5,453.8 M206.4,440.6 L207.0,446.0 M218.2,433.4 L218.8,438.7 M229.4,426.6 L230.0,431.7 M240.1,420.1 L240.6,425.1 M250.1,414.0 L250.6,418.9 M259.7,408.2 L260.2,413.0 M268.8,402.7 L269.3,407.4 M277.5,397.4 L277.9,402.0 M285.7,392.4 L286.1,396.9 M293.6,387.6 L294.0,392.0 M301.2,383.0 L301.5,387.3 M308.4,378.6 L308.7,382.8 M315.3,374.5 L315.6,378.6 M144.3,485.0 L145.1,491.1 M159.7,475.3 L160.5,481.3 M174.3,466.3 L175.0,472.1 M188.0,457.8 L188.7,463.4 M200.8,449.8 L201.5,455.3 M213.0,442.3 L213.6,447.6 M224.5,435.1 L225.1,440.3 M235.4,428.4 L235.9,433.4 M245.7,422.0 L246.2,426.9 M255.5,415.9 L255.9,420.7 M264.8,410.1 L265.2,414.8 M273.6,404.6 L274.0,409.2 M282.1,399.4 L282.5,403.9 M290.1,394.4 L290.5,398.8 M297.8,389.6 L298.2,393.9 M305.2,385.1 L305.5,389.3 M312.2,380.7 L312.5,384.8 M318.9,376.5 L319.2,380.6" stroke="#587560" stroke-width="1" fill="none" opacity="0.7"/>
<path d="M94.2,196.0 L308.5,190.4 L322.5,378.5 L137.0,496.2 Z" fill="url(#mute)"/>
<path d="M94.2,196.0 L308.5,190.4 L322.5,378.5 L137.0,496.2 Z" fill="url(#vdark)"/>
<path d="M277.0,190.6 L308.5,190.4 L322.5,378.5 L293.0,377.8 Z" fill="#4f6f58" opacity="0.22"/>
<path d="M43.5,195.5 L44.5,195.5 L91.5,494.6 L90.6,494.6 Z" fill="#b9c9b0"/>
<path d="M44.5,195.5 L68.5,195.7 L113.5,495.4 L91.5,494.6 Z" fill="#9f8e62"/>
<path d="M68.5,195.7 L82.6,195.9 L126.4,495.8 L113.5,495.4 Z" fill="#bdb56f"/>
<path d="M82.6,195.9 L94.2,196.0 L137.0,496.2 L126.4,495.8 Z" fill="#8aa98f"/>
<path d="M83.7,203.3 L95.3,203.5 M84.8,210.8 L96.3,210.9 M85.9,218.2 L97.4,218.3 M86.9,225.5 L98.4,225.7 M88.0,232.9 L99.5,233.0 M89.1,240.2 L100.5,240.3 M90.1,247.4 L101.6,247.6 M91.2,254.7 L102.6,254.8 M92.2,261.9 L103.6,262.0 M93.3,269.0 L104.6,269.2 M94.3,276.2 L105.7,276.4 M95.4,283.3 L106.7,283.5 M96.4,290.4 L107.7,290.6 M97.4,297.4 L108.7,297.6 M98.5,304.5 L109.7,304.7 M99.5,311.5 L110.7,311.7 M100.5,318.4 L111.7,318.6 M101.5,325.3 L112.7,325.6 M102.5,332.2 L113.7,332.5 M103.5,339.1 L114.6,339.4 M104.5,346.0 L115.6,346.2 M105.5,352.8 L116.6,353.0 M106.5,359.6 L117.6,359.8 M107.5,366.3 L118.5,366.6 M108.5,373.1 L119.5,373.3 M109.4,379.8 L120.4,380.0 M110.4,386.4 L121.4,386.7 M111.4,393.1 L122.3,393.4 M112.4,399.7 L123.3,400.0 M113.3,406.3 L124.2,406.6 M114.3,412.9 L125.2,413.2 M115.2,419.4 L126.1,419.7 M116.2,425.9 L127.0,426.2 M117.1,432.4 L128.0,432.7 M118.1,438.9 L128.9,439.2 M119.0,445.3 L129.8,445.6 M119.9,451.7 L130.7,452.0 M120.9,458.1 L131.6,458.4 M121.8,464.4 L132.5,464.8 M122.7,470.8 L133.4,471.1 M123.7,477.1 L134.3,477.4 M124.6,483.4 L135.2,483.7 M125.5,489.6 L136.1,490.0" stroke="#5f7d67" stroke-width="0.9" fill="none" opacity="0.7"/>
<path d="M48.8,222.6 L72.6,222.9 M53.0,249.3 L76.6,249.6 M57.1,275.6 L80.6,276.0 M61.2,301.4 L84.5,301.9 M65.2,326.9 L88.3,327.4 M69.1,352.0 L92.1,352.5 M73.0,376.6 L95.8,377.2 M76.8,401.0 L99.4,401.6 M80.6,424.9 L103.0,425.5 M84.3,448.5 L106.6,449.2 M87.9,471.7 L110.1,472.5" stroke="#8a7a52" stroke-width="0.8" fill="none" opacity="0.6"/>
<path d="M277.0,190.6 L293.0,377.8 M292.6,190.6 L307.6,378.1 M301.3,190.6 L315.8,378.3 M90.6,494.6 L293.0,377.8 M113.5,495.4 L307.6,378.1 M126.4,495.8 L315.8,378.3" stroke="#22b422" fill="none" stroke-width="1" opacity="0.55"/>
<path d="M43.5,195.5 L277.0,190.3 L308.5,190.4 L322.5,378.5 L321.5,379.5" stroke="#14bc14" stroke-width="2.4" fill="none" stroke-linejoin="round"/>
<path d="M43.5,195.5 L90.6,494.6 L137.0,496.2" stroke="#14bc14" stroke-width="2.4" fill="none"/>
<path d="M68.5,195.7 L113.5,495.4" stroke="#14bc14" stroke-width="2.4" fill="none"/>
<path d="M82.6,195.9 L126.4,495.8" stroke="#14bc14" stroke-width="2.4" fill="none"/>
<path d="M94.2,196.0 L137.0,496.2" stroke="#14bc14" stroke-width="2.4" fill="none"/>
<path d="M94.2,196.0 L308.5,190.4" stroke="#14bc14" stroke-width="1.6" fill="none"/>
<path d="M137.0,496.2 L322.5,378.5" stroke="#1212ee" stroke-width="2.6" fill="none"/>
<circle cx="292.9" cy="377.8" r="2.8" fill="#3d6b45" opacity="0.85"/>
<path d="M244.2,68.5 L304.6,376" stroke="#f40000" stroke-width="3.2" fill="none"/>
<path d="M307.7,387.7 L298.2,372.6 L310.2,370.3 Z" fill="#f40000"/>
<circle cx="43.5" cy="195.4" r="3.2" fill="#000"/>
<circle cx="94.2" cy="195.4" r="3.2" fill="#000"/>
<circle cx="276.9" cy="190.4" r="3.2" fill="#000"/>
<circle cx="308.4" cy="190.4" r="3.2" fill="#000"/>
<circle cx="322.5" cy="378.7" r="3.2" fill="#000"/>
<circle cx="90.6" cy="494.6" r="3.2" fill="#000"/>
<circle cx="137.0" cy="496.2" r="3.2" fill="#000"/>
</svg>
<svg width="0" height="0" style="position:absolute"><defs>
<g id="cmpicon">
<rect x="0.800" y="0.800" width="23.400" height="23.400" rx="2.600" fill="#fff" stroke="#000" stroke-width="1.500"/>
<path d="M4.600,1 V24 M6.300,1 V24 M11.500,1 V24 M13.100,1 V24" stroke="#000" stroke-width="1" fill="none"/>
<path d="M1,8.500 L4.600,3.500 M1,15.500 L4.600,10.500 M1,22.500 L4.600,17.500" stroke="#000" stroke-width="1.100" fill="none"/>
<path d="M7.700,3 h2.400 v4 h-2.400 z M7.700,9.300 h2.400 v4.400 h-2.400 z M7.700,16 h2.400 v4.400 h-2.400 z M7.700,24 v-1.600 h2.400 v1.600" stroke="#000" stroke-width="1.100" fill="none"/>
<path d="M13.100,12.500 L22.700,1.400 M13.100,23.700 L24,10.500 M19.200,24 L24,18.500" stroke="#000" stroke-width="1.300" fill="none"/>
</g>
<g id="penbox"><rect x="0.700" y="0.700" width="29.800" height="15.400" fill="#fff" stroke="#000" stroke-width="1.400"/><rect x="5.800" y="3.300" width="3" height="10.300" fill="#000"/><rect x="15" y="3.200" width="13.200" height="10.600" fill="#000"/></g>
<g id="chk"><rect x="0.500" y="0.500" width="12" height="12" fill="#fff" stroke="#3c3c3c" stroke-width="1"/><path d="M2.800,6.600 L5.400,9.800 L10.300,2.600" stroke="#1e2428" stroke-width="1.800" fill="none"/></g>
<g id="chks"><rect x="0.500" y="0.500" width="12" height="12" fill="#3399ff" stroke="#23364a" stroke-width="1"/><path d="M2.800,6.600 L5.400,9.800 L10.300,2.600" stroke="#16222e" stroke-width="1.800" fill="none"/></g>
<g id="updn"><path d="M0,3.400 L2.900,0 L5.800,3.400 Z M0,5.400 L2.900,8.800 L5.800,5.400 Z" fill="#111"/></g>
</defs></svg>
<svg width="0" height="0" style="position:absolute"><defs>
<pattern id="p_hz" width="8.250" height="8.250" patternUnits="userSpaceOnUse" x="3" y="3"><rect width="8.250" height="8.250" fill="#fff"/><path d="M-1,9.250 L9.250,-1 M-1,1 L1,-1 M7.250,9.250 L9.250,7.250" stroke="#000" stroke-width="1.100"/></pattern>
<pattern id="p_sm" width="3" height="3" patternUnits="userSpaceOnUse"><rect width="3" height="3" fill="#e8e8e8"/><path d="M-0.500,3.500 L3.500,-0.500" stroke="#444" stroke-width="0.900"/></pattern>
<pattern id="p_gw" width="8" height="8" patternUnits="userSpaceOnUse" patternTransform="translate(6.500,2.500) scale(1.025,0.9875)"><rect width="8" height="8" fill="#fff"/><path d="M0,0 H8 V1.100 H0 Z M1,1 h1 v3.200 h-1 z M6,1 h1 v3.200 h-1 z M2.400,4 h1 v4 h-1 z M4.600,4 h1 v4 h-1 z" fill="#000"/></pattern>
<pattern id="p_gp" width="2" height="2" patternUnits="userSpaceOnUse"><rect width="2" height="2" fill="#fff"/><rect width="1" height="1" fill="#000"/></pattern>
</defs></svg>
<div id="tb">
<div class="cap"></div>
<div class="abs" style="left:1px;top:8px;width:11px;height:11px;background:#b2b2b2;"><svg width="11" height="11" viewBox="0 0 11 11" style="display:block"><path d="M3.200,3.200 L7.800,7.800 M7.800,3.200 L3.200,7.800" stroke="#fff" stroke-width="1.500"/></svg></div>
<div class="abs" style="left:6px;top:36px;width:1px;height:21px;background:#6a6a6a;"></div>
<div class="sep" style="left:24px;"></div>
<div class="sep" style="left:209px;"></div>
<div class="sep" style="left:394px;"></div>
<div class="sep" style="left:579px;"></div>
<div class="t" style="left:29.0px;top:9px;font-size:9.5px;letter-spacing:-0.23px;">Geometriemethode:</div>
<div class="t" style="left:214.1px;top:9px;font-size:9.5px;letter-spacing:-0.41px;">Lage der Referenzlinie:</div>
<div class="t" style="left:398.3px;top:9px;font-size:9.5px;letter-spacing:-0.29px;">Struktur:</div>
<div class="t" style="left:584.0px;top:9px;font-size:9.5px;letter-spacing:-0.42px;">Wandstärke:</div>
<div class="abs" style="left:29px;top:30px;width:44px;height:29px;box-sizing:border-box;background:#c3dcf3;border:1px solid #7fb9ef;"></div>
<svg class="abs" style="left:29px;top:30px;" width="180" height="30" viewBox="0 0 180 30">
<path d="M10.300,20.300 L10.300,7.400 L28.100,10.300 L27.700,23.400" fill="none" stroke="#555" stroke-width="0.900"/><path d="M10.300,20.300 L27.700,23.400" stroke="#111" stroke-width="1.600"/>
<rect x="8.800" y="18.800" width="3.200" height="3.200" fill="#1a1a1a"/><rect x="25.900" y="22" width="3.200" height="3.200" fill="#1a1a1a"/>
<path d="M36,10.800 L40.300,14.400 L36,18 Z" fill="#2a2020"/>
<g stroke="#c4c4c4" fill="none" stroke-width="1"><ellipse cx="63.300" cy="10.300" rx="9.200" ry="3.700"/><path d="M54.100,10.300 V20.500 C55,22.500 58,23.600 62,23.800 M72.500,10.300 V20.500 C72,21.500 71,22.300 69.500,22.800 M58.600,13.500 V22 M67.800,13.500 V22 M58.600,15.800 H67.800 M63.500,21.500 L67.500,24.200"/></g>
<rect x="62" y="20" width="3" height="3" fill="#b4b4b4"/><rect x="66.100" y="22.800" width="3" height="3" fill="#b4b4b4"/>
<path d="M80,10.800 L84,14.400 L80,18 Z" fill="#adadad"/>
<g stroke="#555" fill="none" stroke-width="0.900"><path d="M100,20.300 V9.400 L115.600,12.500 V23.400 M100,9.400 L103,7.100 L120.700,7.400 L115.600,12.500 M120.700,7.400 V19.200 L115.600,23.400 M100.500,9 L120.700,7.400"/></g><path d="M100,20.300 L115.600,23.400" stroke="#111" stroke-width="1.600"/>
<rect x="98.800" y="18.800" width="3.200" height="3.200" fill="#1a1a1a"/><rect x="113.900" y="22" width="3.200" height="3.200" fill="#1a1a1a"/>
<g stroke="#c4c4c4" fill="none" stroke-width="1"><path d="M143.500,22.200 V12 C144.500,8 148,6.300 152,5.800 L163,5.500 C165,5.800 165.800,6.500 166,7.500 V16 M143.500,22.200 L160.400,24.300 V14.500 L166,8 M143.800,12.500 L160.400,14.500 C160,11 161,9 163,7.500 M160.400,24.300 L165.400,17.500"/></g>
<rect x="142.100" y="20.800" width="3" height="3" fill="#b4b4b4"/><rect x="158.900" y="22.900" width="3" height="3" fill="#b4b4b4"/><rect x="163.900" y="14.600" width="3" height="3" fill="#b4b4b4"/>
</svg>
<div class="btn" style="left:215px;top:31px;width:131px;height:28px;"></div>
<svg class="abs" style="left:216px;top:34px;" width="24" height="22" viewBox="0 0 24 22">
<defs><pattern id="hg" width="2.800" height="2.800" patternUnits="userSpaceOnUse" patternTransform="rotate(45)"><rect width="2.800" height="2.800" fill="#e2e2e2"/><line x1="0.500" y1="0" x2="0.500" y2="2.800" stroke="#9a9a9a" stroke-width="0.900"/></pattern></defs>
<rect x="2.100" y="3" width="19" height="16" fill="#f2f2f2"/><rect x="2.100" y="6.200" width="19" height="10" fill="url(#hg)"/><path d="M2.100,6.200 H21 M2.100,16.200 H21" stroke="#9aa0a4" stroke-width="0.800"/><path d="M2.100,2.950 H21.900" stroke="#1c2a33" stroke-width="1.700"/><path d="M21.400,3 V19.800 M2.100,19.300 H21.900" fill="none" stroke="#1c2a33" stroke-width="1.100"/></svg>
<div class="t" style="left:241.2px;top:38px;font-size:12px;letter-spacing:-0.74px;">Außen</div>
<div class="arr" style="left:337.0px;top:40.6px;border-left-color:#333;"></div>
<div class="btn" style="left:348px;top:31px;width:41px;height:28px;border-color:#bdbdbd;"></div>
<svg class="abs" style="left:355px;top:34px;" width="28" height="20" viewBox="0 0 28 20">
<path d="M2.300,2.900 H15.700 V8.500" fill="none" stroke="#222" stroke-width="1" stroke-dasharray="2 1.200"/>
<path d="M2.300,10.600 H16.200" stroke="#1c2a33" stroke-width="1.700"/><path d="M15.700,10.600 V18.300 H2.300" fill="none" stroke="#1c2a33" stroke-width="1.100"/>
<path d="M19.500,6.200 C24.800,7.500 24.800,15 19.500,16.300" fill="none" stroke="#222" stroke-width="1"/>
<path d="M18.300,6 L21.800,3.600 M18.300,6 L21.800,8.200 M18.300,16.500 L21.800,14.300 M18.300,16.500 L21.800,18.800" fill="none" stroke="#222" stroke-width="1"/>
</svg>
<div class="btn" style="left:400px;top:31px;width:42px;height:28px;"></div>
<svg class="abs" style="left:407px;top:35px;" width="20" height="20" viewBox="0 0 20 20">
<defs><pattern id="hg2" width="2.400" height="2.400" patternUnits="userSpaceOnUse" patternTransform="rotate(45)"><rect width="2.400" height="2.400" fill="#d6d6d6"/><line x1="0.500" y1="0" x2="0.500" y2="2.400" stroke="#666" stroke-width="1"/></pattern></defs>
<rect x="7.700" y="2.500" width="5.100" height="15" fill="url(#hg2)"/><path d="M5,17.400 V2.500 H15.500 V17.400 M7.700,2.500 V17.400 M12.800,2.500 V17.400" fill="none" stroke="#222" stroke-width="1"/><path d="M1.200,17.400 H18.900" stroke="#222" stroke-width="1.300"/></svg>
<div class="arr" style="left:433.8px;top:40.6px;border-left-color:#333;"></div>
<div class="btn" style="left:444px;top:31px;width:130px;height:28px;"></div>
<svg class="abs" style="left:448px;top:35px;" width="25" height="20" viewBox="0 0 25 25" preserveAspectRatio="none"><use href="#cmpicon"/></svg>
<div class="t" style="left:477.3px;top:38px;font-size:11px;letter-spacing:-0.05px;">WA | HLZ + Ker...</div>
<div class="arr" style="left:566.0px;top:40.6px;border-left-color:#333;"></div>
<svg class="abs" style="left:596px;top:32px;" width="22" height="26" viewBox="0 0 22 26">
<path d="M7.600,17.500 V2.700 H13.400 V17.500 M1,17.500 H19" fill="none" stroke="#9aa1a5" stroke-width="1.100"/>
<path d="M5.500,21.600 H15.500" fill="none" stroke="#9aa1a5" stroke-width="1.100"/><path d="M4.200,21.600 L7,19.400 V23.800 Z M16.900,21.600 L14.100,19.400 V23.800 Z" fill="#9aa1a5"/></svg>
<div class="abs" style="left:628px;top:33px;width:132px;height:19px;box-sizing:border-box;border:1px solid #bdbdbd;background:#f0f0f0;box-shadow:inset 0 0 0 1.500px #fff;"></div>
<div class="t" style="left:632.1px;top:36px;font-size:11px;letter-spacing:-0.18px;color:#707780;">0,505</div>
</div><div id="dlg">
<div class="title"></div>
<svg class="abs" style="left:8px;top:6px;" width="16" height="16" viewBox="0 0 16 16"><path d="M1,12.500 C0,6 4,0.800 9,0.800 C13,1 15.300,4 15,8 C14.500,12 11,14.500 7.500,14.200 C5,14 3,13.500 1,12.500 Z" fill="#55575a"/><path d="M1.600,13 C2.500,7.500 6,3.800 10,4 C12.300,4.300 13.300,6.200 13.200,8.300" fill="none" stroke="#fff" stroke-width="1.500"/><circle cx="13.100" cy="9.300" r="0.900" fill="#fff"/></svg>
<div class="t" style="left:29.5px;top:8px;font-size:12px;letter-spacing:-0.04px;">Mehrschichtige Bauteile</div>
<div class="t" style="left:658.5px;top:7px;font-size:13px;">?</div>
<svg class="abs" style="left:701px;top:8px;" width="12" height="12" viewBox="0 0 12 12"><path d="M0.800,0.800 L10.600,10.600 M10.600,0.800 L0.800,10.600" stroke="#111" stroke-width="1.100" fill="none"/></svg>
<div class="btn" style="left:16px;top:41px;width:698px;height:38px;"></div>
<svg class="abs" style="left:20px;top:47px;" width="25" height="25" viewBox="0 0 25 25"><use href="#cmpicon"/></svg>
<div class="t" style="left:49.0px;top:53px;font-size:11px;letter-spacing:0.16px;">WA | HLZ + Kerndämmung</div>
<div class="arr" style="left:706px;top:55px;"></div>
<div class="pb" style="left:16px;top:91px;width:118px;"></div>
<div class="t" style="left:60.6px;top:95px;font-size:11px;letter-spacing:-0.05px;">Neu...</div>
<div class="pb" style="left:146px;top:91px;width:118px;"></div>
<div class="t" style="left:165.2px;top:95px;font-size:11px;letter-spacing:0.30px;">Umbenennen...</div>
<div class="pb" style="left:276px;top:91px;width:138px;"></div>
<div class="t" style="left:319.1px;top:95px;font-size:11px;letter-spacing:-0.04px;">Löschen...</div>
<div class="abs" style="left:15px;top:123px;width:700px;height:22px;background:#d4d4d4;border-radius:3px;"></div>
<div class="abs" style="left:20px;top:132px;width:0;height:0;border-left:4px solid transparent;border-right:4px solid transparent;border-top:4px solid #333;"></div>
<div class="t" style="left:35.0px;top:127px;font-size:11px;letter-spacing:-0.07px;font-weight:700;">Schicht und Linienstruktur bearbeiten</div>
<div class="abs" style="left:15px;top:150px;width:473px;height:216px;background:#fff;"></div>
<div class="abs" style="left:15px;top:231px;width:473px;height:21px;background:#ececec;"></div>
<div class="abs" style="left:15px;top:273px;width:473px;height:21px;background:#ececec;"></div>
<div class="abs" style="left:15px;top:315px;width:473px;height:21px;background:#ececec;"></div>
<div class="abs" style="left:27px;top:150px;width:1px;height:207px;background:#e4e4e4;"></div>
<div class="abs" style="left:48px;top:150px;width:1px;height:207px;background:#e4e4e4;"></div>
<div class="abs" style="left:272px;top:150px;width:1px;height:207px;background:#e4e4e4;"></div>
<div class="abs" style="left:293px;top:150px;width:1px;height:207px;background:#e4e4e4;"></div>
<div class="abs" style="left:363px;top:150px;width:1px;height:207px;background:#e4e4e4;"></div>
<div class="abs" style="left:410px;top:150px;width:1px;height:207px;background:#e4e4e4;"></div>
<svg class="abs" style="left:31px;top:153px;" width="16" height="12" viewBox="0 0 16 12"><path d="M0,4.300 H8 M12.900,4.300 H15" stroke="#1e2a30" stroke-width="1.100" fill="none"/><path d="M3.400,7.200 L7,10.600 L11.800,2.200" stroke="#1e2a30" stroke-width="1.900" fill="none"/></svg>
<div class="t" style="left:51.3px;top:152px;font-size:11px;letter-spacing:0.24px;">Schicht und Trennlinie</div>
<svg class="abs" style="left:275px;top:153px;" width="16" height="12" viewBox="0 0 16 12"><path d="M2.500,9.500 L6.500,2.500 M5.500,9.800 L9.500,3 M10.500,9.800 L14.500,3.500" stroke="#b4b8ba" stroke-width="0.900" fill="none"/><path d="M1.400,2 V9.800 M15.500,2 V9.800" stroke="#1e2a30" stroke-width="1.200" fill="none"/><path d="M4.800,7.500 L7.900,10.200 L12.600,2.400" stroke="#1e2a30" stroke-width="1.900" fill="none"/></svg>
<div class="t" style="left:296.3px;top:152px;font-size:11px;letter-spacing:0.26px;">Linien-Stift</div>
<div class="t" style="left:366.2px;top:152px;font-size:11px;letter-spacing:-1.07px;">Typ</div>
<svg class="abs" style="left:416px;top:153px;" width="8" height="12" viewBox="0 0 8 12"><path d="M0.300,0.600 H7.500 M0.300,11.400 H7.500 M1.200,6 H6.600 M3.900,0.600 V11.400" stroke="#111" stroke-width="1.100" fill="none"/><path d="M1.800,3.600 L3.900,1.200 L6,3.600 Z M1.800,8.400 L3.900,10.800 L6,8.400 Z" fill="#111"/></svg>
<svg class="abs" style="left:32px;top:172px;" width="13" height="13"><use href="#chk"/></svg>
<div class="abs" style="left:51px;top:178px;width:46px;height:1px;background:#111;"></div>
<div class="t" style="left:101.2px;top:172px;font-size:11px;letter-spacing:0.31px;">Außen/Oben: Volllinie</div>
<div class="t" style="left:294.7px;top:172px;font-size:11px;">3</div>
<svg class="abs" style="left:331px;top:170px;" width="32" height="17"><use href="#penbox"/></svg>
<svg class="abs" style="left:32px;top:214px;" width="13" height="13"><use href="#chk"/></svg>
<div class="abs" style="left:51px;top:220px;width:46px;height:1px;background:#111;"></div>
<div class="t" style="left:101.2px;top:214px;font-size:11px;letter-spacing:0.36px;">Volllinie</div>
<div class="t" style="left:294.7px;top:214px;font-size:11px;">3</div>
<svg class="abs" style="left:331px;top:212px;" width="32" height="17"><use href="#penbox"/></svg>
<svg class="abs" style="left:32px;top:256px;" width="13" height="13"><use href="#chk"/></svg>
<div class="abs" style="left:51px;top:262px;width:46px;height:1px;background:#111;"></div>
<div class="t" style="left:101.2px;top:256px;font-size:11px;letter-spacing:0.36px;">Volllinie</div>
<div class="t" style="left:294.7px;top:256px;font-size:11px;">3</div>
<svg class="abs" style="left:331px;top:254px;" width="32" height="17"><use href="#penbox"/></svg>
<svg class="abs" style="left:32px;top:298px;" width="13" height="13"><use href="#chk"/></svg>
<div class="abs" style="left:51px;top:304px;width:46px;height:1px;background:#111;"></div>
<div class="t" style="left:101.2px;top:298px;font-size:11px;letter-spacing:0.36px;">Volllinie</div>
<div class="t" style="left:294.7px;top:298px;font-size:11px;">2</div>
<svg class="abs" style="left:331px;top:296px;" width="32" height="17"><use href="#penbox"/></svg>
<svg class="abs" style="left:32px;top:340px;" width="13" height="13"><use href="#chk"/></svg>
<div class="abs" style="left:51px;top:346px;width:46px;height:1px;background:#111;"></div>
<div class="t" style="left:101.2px;top:340px;font-size:11px;letter-spacing:0.41px;">Innen/Unten: Volllinie</div>
<div class="t" style="left:294.7px;top:340px;font-size:11px;">2</div>
<svg class="abs" style="left:331px;top:338px;" width="32" height="17"><use href="#penbox"/></svg>
<div class="abs" style="left:15px;top:189px;width:473px;height:21px;background:#3399ff;"></div>
<div class="abs" style="left:27px;top:189px;width:1px;height:21px;background:#8cc4ff;"></div>
<div class="abs" style="left:48px;top:189px;width:1px;height:21px;background:#8cc4ff;"></div>
<div class="abs" style="left:272px;top:189px;width:1px;height:21px;background:#8cc4ff;"></div>
<div class="abs" style="left:293px;top:189px;width:1px;height:21px;background:#8cc4ff;"></div>
<div class="abs" style="left:363px;top:189px;width:1px;height:21px;background:#8cc4ff;"></div>
<div class="abs" style="left:410px;top:189px;width:1px;height:21px;background:#8cc4ff;"></div>
<svg class="abs" style="left:18.6px;top:194.4px;" width="7" height="10"><use href="#updn"/></svg>
<svg class="abs" style="left:50px;top:190px;" width="23" height="19" viewBox="0 0 23 19"><rect x="0.500" y="0.500" width="22" height="18" fill="url(#p_hz)" stroke="#000" stroke-width="1.200"/></svg>
<div class="sw" style="left:74px;top:190px;background:#b9b6b0;"></div>
<div class="t" style="left:101.4px;top:193px;font-size:11px;letter-spacing:0.16px;color:#fff;">Vormauerziegel</div>
<div class="btn" style="left:253px;top:190px;width:19px;height:19px;border-color:#8e8e8e;"></div>
<div class="arr" style="left:260px;top:195px;"></div>
<svg class="abs" style="left:277px;top:193px;" width="13" height="13"><use href="#chks"/></svg>
<div class="abs" style="left:294px;top:190px;width:35px;height:19px;background:#fff;"></div>
<div class="abs" style="left:294px;top:192px;width:8px;height:15px;background:#3399ff;"></div>
<div class="t" style="left:294.7px;top:193px;font-size:11px;color:#fff;">3</div>
<div class="btn" style="left:329px;top:190px;width:34px;height:19px;border-color:#8e8e8e;"></div>
<svg class="abs" style="left:333px;top:193px;" width="28" height="13" viewBox="0 0 28 13"><rect x="1.500" y="1.500" width="3" height="10" rx="1.500" fill="#000"/><rect x="10" y="0.500" width="17" height="12" rx="3.500" fill="#000"/></svg>
<svg class="abs" style="left:369px;top:192px;" width="14" height="15" viewBox="0 0 14 15"><path d="M2.500,0 V15 M10.500,0 V15" stroke="#1d4f85" stroke-width="1" stroke-dasharray="1 1" fill="none" opacity="1"/></svg>
<div class="btn" style="left:390px;top:190px;width:19px;height:19px;border-color:#8e8e8e;"></div>
<div class="arr" style="left:397px;top:195px;"></div>
<div class="abs" style="left:411px;top:189px;width:76px;height:21px;box-sizing:border-box;background:#fff;border:1px solid #3399ff;border-left:none;"></div>
<div class="t" style="left:412.0px;top:193px;font-size:11px;">0,115</div>
<svg class="abs" style="left:18.6px;top:236.4px;" width="7" height="10"><use href="#updn"/></svg>
<svg class="abs" style="left:50px;top:232px;" width="23" height="19" viewBox="0 0 23 19"><rect x="0.500" y="0.500" width="22" height="18" fill="url(#p_gw)" stroke="#000" stroke-width="1.200"/></svg>
<div class="sw" style="left:74px;top:232px;background:#f7e29c;"></div>
<div class="t" style="left:101.4px;top:235px;font-size:11px;letter-spacing:0.14px;">Glaswolle</div>
<svg class="abs" style="left:277px;top:235px;" width="13" height="13"><use href="#chk"/></svg>
<div class="t" style="left:294.7px;top:235px;font-size:11px;">3</div>
<svg class="abs" style="left:331px;top:233px;" width="32" height="17"><use href="#penbox"/></svg>
<svg class="abs" style="left:369px;top:234px;" width="14" height="15" viewBox="0 0 14 15"><path d="M2.500,0 V15 M10.500,0 V15" stroke="#777" stroke-width="1" stroke-dasharray="1 1" fill="none" opacity="1"/></svg>
<div class="t" style="left:412.0px;top:235px;font-size:11px;letter-spacing:-0.21px;">0,140</div>
<svg class="abs" style="left:18.6px;top:278.4px;" width="7" height="10"><use href="#updn"/></svg>
<svg class="abs" style="left:50px;top:274px;" width="23" height="19" viewBox="0 0 23 19"><rect x="0.500" y="0.500" width="22" height="18" fill="url(#p_hz)" stroke="#000" stroke-width="1.200"/></svg>
<div class="sw" style="left:74px;top:274px;background:#c49f88;"></div>
<div class="t" style="left:101.4px;top:277px;font-size:11px;letter-spacing:0.28px;">Hochlochziegel</div>
<svg class="abs" style="left:277px;top:277px;" width="13" height="13"><use href="#chk"/></svg>
<div class="t" style="left:294.7px;top:277px;font-size:11px;">3</div>
<svg class="abs" style="left:331px;top:275px;" width="32" height="17"><use href="#penbox"/></svg>
<svg class="abs" style="left:369px;top:276px;" width="18" height="15" viewBox="0 0 18 15"><path d="M0.500,0 V15 M16.500,0 V15" stroke="#777" stroke-width="1" stroke-dasharray="1 1" fill="none"/><rect x="6.500" y="1.500" width="4" height="11" fill="url(#p_sm)" stroke="#222" stroke-width="1"/></svg>
<div class="t" style="left:412.0px;top:277px;font-size:11px;letter-spacing:-0.21px;">0,240</div>
<svg class="abs" style="left:18.6px;top:320.4px;" width="7" height="10"><use href="#updn"/></svg>
<svg class="abs" style="left:50px;top:316px;" width="23" height="19" viewBox="0 0 23 19"><rect x="0.500" y="0.500" width="22" height="18" fill="url(#p_gp)" stroke="#000" stroke-width="1.200"/></svg>
<div class="sw" style="left:74px;top:316px;background:#ffffff;"></div>
<div class="t" style="left:101.4px;top:319px;font-size:11px;letter-spacing:0.30px;">Gipsputz</div>
<svg class="abs" style="left:277px;top:319px;" width="13" height="13"><use href="#chk"/></svg>
<div class="t" style="left:294.7px;top:319px;font-size:11px;">2</div>
<svg class="abs" style="left:331px;top:317px;" width="32" height="17"><use href="#penbox"/></svg>
<svg class="abs" style="left:369px;top:318px;" width="18" height="15" viewBox="0 0 18 15"><rect x="0.500" y="1.500" width="2" height="11" fill="#fff" stroke="#333" stroke-width="1"/><rect x="13.500" y="1.500" width="2" height="11" fill="#fff" stroke="#333" stroke-width="1"/></svg>
<div class="t" style="left:412.0px;top:319px;font-size:11px;letter-spacing:-0.21px;">0,010</div>
<svg class="abs" style="left:492px;top:174px;" width="9" height="6" viewBox="0 0 9 6"><path d="M0.500,5 L4.500,1 L8.500,5" stroke="#a4a4a4" stroke-width="1.300" fill="none"/></svg>
<svg class="abs" style="left:492px;top:355px;" width="9" height="6" viewBox="0 0 9 6"><path d="M0.500,1 L4.500,5 L8.500,1" stroke="#a4a4a4" stroke-width="1.300" fill="none"/></svg>
<div class="abs" style="left:515px;top:150px;width:5px;height:268px;background:#f8f8f8;"></div>
<div class="t" style="left:15.6px;top:373px;font-size:11px;letter-spacing:-0.05px;">Gesamtstärke: [m]</div>
<div class="t" style="left:411.0px;top:373px;font-size:11px;letter-spacing:-0.13px;">0,505</div>
<div class="pb" style="left:16px;top:396px;width:118px;"></div>
<div class="pb" style="left:146px;top:396px;width:118px;"></div>
<div class="t" style="left:31.2px;top:400px;font-size:11px;letter-spacing:0.35px;">Schicht einfügen</div>
<div class="t" style="left:159.6px;top:400px;font-size:11px;letter-spacing:0.28px;">Schicht entfernen</div>
<div class="abs" style="left:15px;top:430px;width:699px;height:1px;background:#a0a0a0;"></div>
<div class="pb" style="left:526px;top:443px;width:88px;"></div>
<div class="pb" style="left:626px;top:443px;width:88px;border:2px solid #0078d7;"></div>
<div class="t" style="left:541.9px;top:447px;font-size:11px;letter-spacing:0.31px;">Abbrechen</div>
<div class="t" style="left:662.4px;top:447px;font-size:11px;letter-spacing:-0.91px;">OK</div>
<svg class="abs" style="left:719px;top:465px;" width="9" height="9" viewBox="0 0 9 9"><g fill="#bdbdbd"><rect x="6" y="0" width="2" height="2"/><rect x="3" y="3" width="2" height="2"/><rect x="6" y="3" width="2" height="2"/><rect x="0" y="6" width="2" height="2"/><rect x="3" y="6" width="2" height="2"/><rect x="6" y="6" width="2" height="2"/></g></svg>
<svg class="abs" style="left:528px;top:147px;" width="190" height="225" viewBox="0 0 190 225">
<g transform="translate(50,6)"><path d="M1,11.500 L6,1.500 H14.500 L9.500,8 L16.500,11.500 Z" fill="url(#p_sm)" stroke="#333" stroke-width="1.100"/></g>
<g transform="translate(140,3)" fill="none" stroke="#333" stroke-width="1"><path d="M5,0.500 h2.500 v6 h-2.500 z"/><path d="M3.500,6.500 h5.500 v2.500 h-5.500 z"/><path d="M2.500,9 h8 l0.500,5 h-10 z M3.500,11 v3 M5.500,11 v3 M7.500,10.500 v3.500"/></g>
<rect x="17" y="24" width="169" height="193" fill="#fff"/>
<rect x="19.5" y="25.4" width="80.500" height="43.5" fill="url(#p_hz)" stroke="#000" stroke-width="1"/>
<rect x="104.7" y="25.4" width="80.500" height="43.5" fill="#b9b6b0" stroke="#000" stroke-width="1"/>
<rect x="19.5" y="68.9" width="80.500" height="52.9" fill="url(#p_gw)" stroke="#000" stroke-width="1"/>
<rect x="104.7" y="68.9" width="80.500" height="52.9" fill="#f7e29c" stroke="#000" stroke-width="1"/>
<rect x="19.5" y="121.8" width="80.500" height="90.7" fill="url(#p_hz)" stroke="#000" stroke-width="1"/>
<rect x="104.7" y="121.8" width="80.500" height="90.7" fill="#c49f88" stroke="#000" stroke-width="1"/>
<rect x="19.5" y="212.5" width="80.500" height="4.3" fill="url(#p_gp)" stroke="#000" stroke-width="1"/>
<rect x="104.7" y="212.5" width="80.500" height="4.3" fill="#ffffff" stroke="#000" stroke-width="1"/>
<path d="M17,24.6 H185.7" stroke="#777" stroke-width="1.500" fill="none"/>
<path d="M18.2,24.0 V216.5" stroke="#4a4a4a" stroke-width="1.800" fill="none"/>
<path d="M15.9,26 V69.4" stroke="#000" stroke-width="1.900" fill="none"/>
<path d="M2,47.5 H12" stroke="#000" stroke-width="1.100" fill="none"/><path d="M15.0,47.5 l-4.200,-3.200 v6.400 z" fill="#000"/>
</svg>
<div class="t" style="left:545.2px;top:373px;font-size:11px;letter-spacing:0.36px;">Verfügbar für:</div>
<div class="abs" style="left:545px;top:393px;width:35px;height:24px;box-sizing:border-box;background:#c3dcf3;border:1px solid #84bcef;"></div>
<svg class="abs" style="left:545px;top:393px;" width="140" height="24" viewBox="0 0 140 24" fill="#fbfbfb" stroke="#2a3338" stroke-width="1.100" stroke-linejoin="round">
<path d="M8.400,5.900 L26.600,3.200 L26.600,14.200 L8.400,20.300 Z" fill="#fbfbfb" stroke-width="1.200"/>
<path d="M39.400,14.200 L46.400,10.900 L44.600,7.700 L53.400,5.600 L66.300,12.200 L48.500,19.100 Z"/>
<path d="M74,12.600 L79.300,3.500 L95.400,3.200 L101,13.700 L91.900,11.200 L84.900,20.300 Z M95.400,3.200 L91.900,11.200"/>
<path d="M111.200,8.100 C118,11.500 126,9 133.800,3.900 L129.300,18.200 L124,14 L117,20.700 Z M133.800,3.900 L124,14"/>
</svg>
</div><svg class="abs" style="left:0;top:0;pointer-events:none" width="1073" height="579"><rect x="219.600" y="34.300" width="134.500" height="33.300" fill="none" stroke="#fa0000" stroke-width="2.200"/><rect x="349.700" y="284.700" width="476.500" height="25.500" fill="none" stroke="#fa0000" stroke-width="2.400"/></svg>

</body></html>
